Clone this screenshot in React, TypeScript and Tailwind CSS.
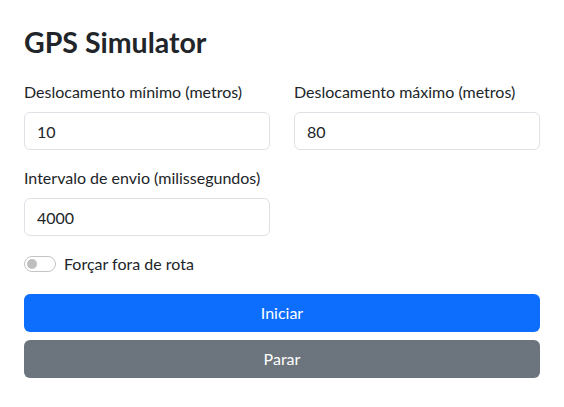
import React from "react";

export default function App() {
  const font = { fontFamily: 'Lato, "Liberation Sans", sans-serif' };
  return (
    <div className="w-[564px] h-[407px] bg-white text-[#212529] text-[16px] leading-6" style={font}>
      <div className="px-6 pt-6">
        <h1 className="text-[28.5px] leading-[37px] font-bold mb-[19px]">GPS Simulator</h1>
        <div className="grid grid-cols-2 gap-x-6">
          <div className="mb-4">
            <label className="block mb-2 whitespace-nowrap">Deslocamento mínimo (metros)</label>
            <input
              defaultValue="10"
              className="block w-full h-[38px] px-3 border border-[#dee2e6] rounded-[6px] outline-none"
              style={font}
            />
          </div>
          <div className="mb-4">
            <label className="block mb-2 whitespace-nowrap">Deslocamento máximo (metros)</label>
            <input
              defaultValue="80"
              className="block w-full h-[38px] px-3 border border-[#dee2e6] rounded-[6px] outline-none"
              style={font}
            />
          </div>
          <div className="mb-4">
            <label className="block mb-2 whitespace-nowrap">Intervalo de envio (milissegundos)</label>
            <input
              defaultValue="4000"
              className="block w-full h-[38px] px-3 border border-[#dee2e6] rounded-[6px] outline-none"
              style={font}
            />
          </div>
        </div>
        <div className="flex items-center h-6 mb-[18px]">
          <span className="w-8 h-4 rounded-full border border-[#c4c4c4] flex items-center px-[2px]">
            <span className="w-[10px] h-[10px] rounded-full bg-[#bfbfbf]" />
          </span>
          <span className="ml-2">Forçar fora de rota</span>
        </div>
        <button className="block w-full h-[38px] rounded-[6px] bg-[#0d6efd] text-white mb-2" style={font}>
          Iniciar
        </button>
        <button className="block w-full h-[38px] rounded-[6px] bg-[#6c757d] text-white" style={font}>
          Parar
        </button>
      </div>
    </div>
  );
}
